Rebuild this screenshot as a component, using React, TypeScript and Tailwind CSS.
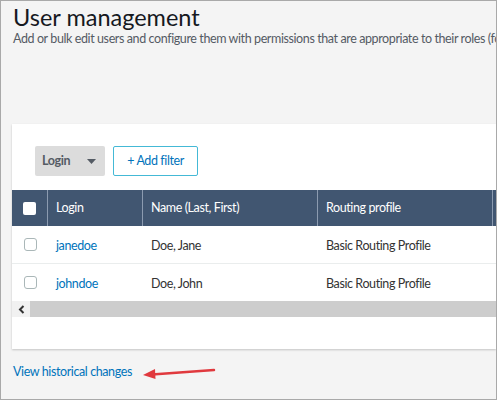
import React from 'react';

const cols = [
  { key: 'login', label: 'Login', w: 'w-[95px]' },
  { key: 'name', label: 'Name (Last, First)', w: 'w-[175px]' },
  { key: 'profile', label: 'Routing profile', w: 'w-[175px]' },
];

const users = [
  { login: 'janedoe', name: 'Doe, Jane', profile: 'Basic Routing Profile', h: 'h-[38px]' },
  { login: 'johndoe', name: 'Doe, John', profile: 'Basic Routing Profile', h: 'h-[37px]' },
];

export default function App() {
  return (
    <div
      className="w-[497px] h-[400px] overflow-hidden border border-[#a9a9a9] bg-[#f4f4f4]"
      style={{ fontFamily: 'Lato, "Open Sans", sans-serif' }}
    >
      <div className="pl-[12px] pt-[2px]">
        <h1 className="text-[23.5px] leading-[28px] text-[#16191f] whitespace-nowrap">User management</h1>
        <p className="text-[12.5px] leading-[16px] tracking-[-0.4px] text-[#545b64] whitespace-nowrap">
          Add or bulk edit users and configure them with permissions that are appropriate to their roles (for
        </p>
      </div>

      <div className="mt-[77px] ml-[11px] bg-white shadow-[0_1px_2px_rgba(0,0,0,0.2)] pt-[22px] pb-[32px] overflow-hidden">
        <div className="flex gap-[8px] pl-[23px] tracking-[-0.4px]">
          <div className="flex items-center justify-between w-[70px] h-[30px] rounded-[2px] bg-[#dcdcdc] pl-[7px] pr-[9px]">
            <span className="text-[12.5px] font-bold text-[#545b64]">Login</span>
            <svg width="9" height="5" viewBox="0 0 9 5">
              <path d="M0 0h9L4.5 5z" fill="#545b64" />
            </svg>
          </div>
          <button className="h-[30px] w-[85px] rounded-[2px] border border-[#44b9d6] bg-white text-[12.5px] text-[#0073bb]">
            + Add filter
          </button>
        </div>

        <div className="mt-[14px] w-[600px] tracking-[-0.4px]">
          <div className="flex h-[36px] bg-[#415671] text-white text-[12.5px]">
            <div className="w-[36px] flex items-center justify-center border-r border-[#8c9bb0]">
              <span className="w-[13px] h-[13px] rounded-[2px] bg-white" />
            </div>
            {cols.map((c) => (
              <div key={c.key} className={`${c.w} flex items-center pl-[8px] pt-[1px] border-r border-[#8c9bb0]`}>
                {c.label}
              </div>
            ))}
            <div className="flex-1" />
          </div>

          {users.map((u, i) => (
            <div
              key={u.login}
              className={`flex ${u.h} text-[12.5px] text-[#333333] ${i === 0 ? 'border-b border-[#eaeded]' : ''}`}
            >
              <div className="w-[36px] flex items-center justify-center">
                <span className="w-[13px] h-[13px] rounded-[3px] border border-[#aab7b8] bg-white" />
              </div>
              <div className="w-[95px] flex items-center pl-[8px] pt-[3px] text-[#0073bb]">{u.login}</div>
              <div className="w-[175px] flex items-center pl-[8px] pt-[3px]">{u.name}</div>
              <div className="w-[175px] flex items-center pl-[8px] pt-[3px]">{u.profile}</div>
            </div>
          ))}

          <div className="flex h-[16px]">
            <div className="w-[18px] bg-[#f1f1f1] flex items-center justify-center">
              <svg width="7" height="9" viewBox="0 0 7 9">
                <path d="M5.5 1L2 4.5 5.5 8" stroke="#333" strokeWidth="2" fill="none" />
              </svg>
            </div>
            <div className="flex-1 bg-[#cdcdcd]" />
          </div>
        </div>
      </div>

      <div className="flex items-center mt-[14px] pl-[12px]">
        <span className="text-[12.5px] tracking-[-0.4px] text-[#0073bb]">View historical changes</span>
        <svg width="76" height="14" viewBox="0 0 76 14" className="ml-[10px]">
          <path d="M10 9.5L72 5" stroke="#e0393e" strokeWidth="2.5" strokeLinecap="round" />
          <path d="M1 10L13 4 13.5 14z" fill="#e0393e" />
        </svg>
      </div>
    </div>
  );
}
